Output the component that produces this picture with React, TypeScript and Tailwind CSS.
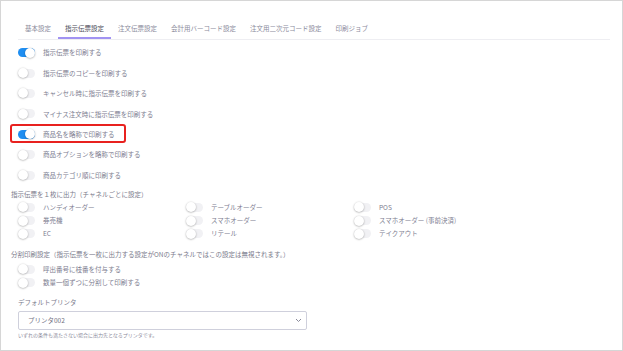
import React from 'react';

const tabs = ['基本設定', '指示伝票設定', '注文伝票設定', '会計用バーコード設定', '注文用二次元コード設定', '印刷ジョブ'];

const Toggle = ({ on }: { on?: boolean }) => (
  <span
    className={`flex h-[9px] w-[17px] shrink-0 items-center rounded-full ${
      on ? 'justify-end bg-[#1f8ef1]' : 'justify-start bg-[#f1f1f4]'
    }`}
  >
    <span className="h-[10px] w-[10px] rounded-full bg-white shadow-[0_0.5px_2px_rgba(0,0,0,0.35)]" />
  </span>
);

const Row = ({ label, on }: { label: string; on?: boolean }) => (
  <div className="flex h-[20.4px] items-center">
    <Toggle on={on} />
    <span className="ml-[8px] text-[6.5px] text-[#7d7d90]">{label}</span>
  </div>
);

const SmallRow = ({ label }: { label: string }) => (
  <div className="flex h-[13.2px] items-center">
    <Toggle />
    <span className="ml-[8px] text-[6.5px] text-[#7d7d90]">{label}</span>
  </div>
);

const channels = [
  'ハンディオーダー',
  'テーブルオーダー',
  'POS',
  '券売機',
  'スマホオーダー',
  'スマホオーダー (事前決済)',
  'EC',
  'リテール',
  'テイクアウト',
];

export default function App() {
  return (
    <div
      className="h-[351px] w-[623px] overflow-hidden border border-[#d6d6d6] bg-white leading-none"
      style={{ fontFamily: '"Noto Sans CJK JP", "Noto Sans", sans-serif' }}
    >
      <div className="pl-[17px] pr-[12px] pt-[19px]">
        <div className="flex border-b border-[#eeeef2]">
          {tabs.map((t, i) => (
            <div
              key={t}
              className={`px-[7px] pb-[5px] pt-[5px] text-[6.5px] ${
                i === 1 ? 'border-b-2 border-[#a193f2] text-[#4a4a58]' : 'mb-[2px] text-[#8b8b9c]'
              }`}
            >
              {t}
            </div>
          ))}
        </div>
      </div>

      <div className="pl-[17px] pt-[3px]">
        <Row label="指示伝票を印刷する" on />
        <Row label="指示伝票のコピーを印刷する" />
        <Row label="キャンセル時に指示伝票を印刷する" />
        <Row label="マイナス注文時に指示伝票を印刷する" />
        <div className="relative">
          <Row label="商品名を略称で印刷する" on />
          <span className="absolute left-[-8px] top-[0px] h-[19px] w-[116px] rounded-[3px] border-2 border-[#e8211f]" />
        </div>
        <Row label="商品オプションを略称で印刷する" />
        <Row label="商品カテゴリ順に印刷する" />
      </div>

      <div className="pl-[10px] pt-[6px] text-[6.5px] text-[#7a7a8b]">指示伝票を１枚に出力（チャネルごとに設定）</div>
      <div className="grid w-[521px] grid-cols-3 pl-[17px] pt-[3px]">
        {channels.map((c) => (
          <SmallRow key={c} label={c} />
        ))}
      </div>

      <div className="pl-[10px] pt-[11px] text-[6.5px] text-[#7a7a8b]">
        分割印刷設定（指示伝票を一枚に出力する設定がONのチャネルではこの設定は無視されます。）
      </div>
      <div className="pl-[17px] pt-[5px]">
        <SmallRow label="呼出番号に枝番を付与する" />
        <SmallRow label="数量一個ずつに分割して印刷する" />
      </div>

      <div className="pl-[17px] pt-[10px]">
        <div className="text-[6.5px] text-[#7a7a8b]">デフォルトプリンタ</div>
        <div className="mt-[5px] flex h-[19px] w-[289px] items-center justify-between rounded-[2px] border border-[#cfd0dc] pl-[9px] pr-[4px]">
          <span className="text-[6.5px] text-[#707082]">プリンタ002</span>
          <svg width="7" height="5" viewBox="0 0 7 5" className="text-[#8a8a9a]">
            <path d="M1 1l2.5 2.5L6 1" fill="none" stroke="currentColor" strokeWidth="1" />
          </svg>
        </div>
        <div className="mt-[2px] text-[5px] text-[#8a8a9a]">いずれの条件も満たさない場合に出力先となるプリンタです。</div>
      </div>
    </div>
  );
}
